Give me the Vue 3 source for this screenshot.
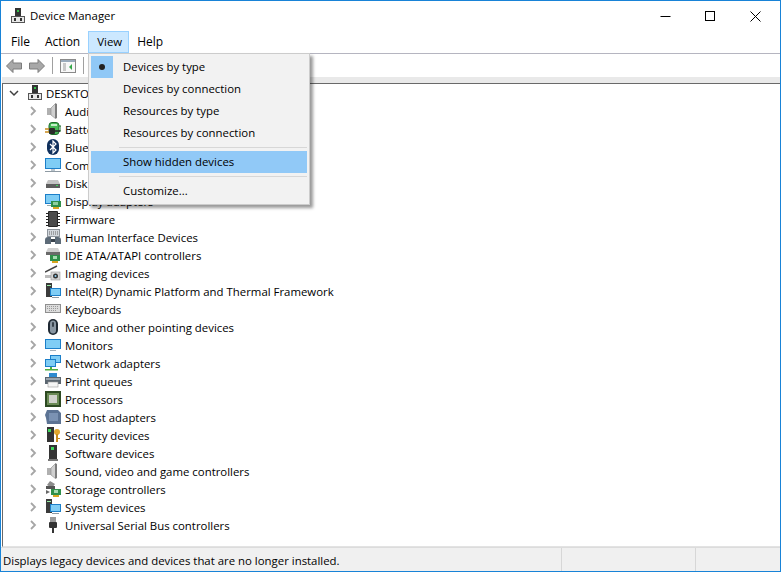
<script setup>
const menuBar = ['File', 'Action', 'View', 'Help']

const devices = [
  { label: 'Audio inputs and outputs', icon: 'speaker' },
  { label: 'Batteries', icon: 'battery' },
  { label: 'Bluetooth', icon: 'bluetooth' },
  { label: 'Computer', icon: 'monitor' },
  { label: 'Disk drives', icon: 'disk' },
  { label: 'Display adapters', icon: 'display' },
  { label: 'Firmware', icon: 'chip' },
  { label: 'Human Interface Devices', icon: 'hid' },
  { label: 'IDE ATA/ATAPI controllers', icon: 'ide' },
  { label: 'Imaging devices', icon: 'camera' },
  { label: 'Intel(R) Dynamic Platform and Thermal Framework', icon: 'system' },
  { label: 'Keyboards', icon: 'keyboard' },
  { label: 'Mice and other pointing devices', icon: 'mouse' },
  { label: 'Monitors', icon: 'monitor2' },
  { label: 'Network adapters', icon: 'network' },
  { label: 'Print queues', icon: 'printer' },
  { label: 'Processors', icon: 'cpu' },
  { label: 'SD host adapters', icon: 'sd' },
  { label: 'Security devices', icon: 'security' },
  { label: 'Software devices', icon: 'software' },
  { label: 'Sound, video and game controllers', icon: 'speaker' },
  { label: 'Storage controllers', icon: 'storage' },
  { label: 'System devices', icon: 'system' },
  { label: 'Universal Serial Bus controllers', icon: 'usb' }
]

const icons = {
  pc: '<rect x="5" y="0" width="6" height="8" fill="#333"/><rect x="7" y="2" width="2" height="2" fill="#35c04a"/><rect x="1.500" y="8.500" width="13" height="6" fill="#e8e8e8" stroke="#555"/><rect x="4" y="10" width="2" height="3" fill="#333"/><rect x="10" y="10" width="2" height="3" fill="#333"/>',
  speaker: '<rect x="2" y="5" width="4" height="7" fill="#b0b0b0"/><path d="M6 5 L11 0 V16 L6 12 Z" fill="#d0d0d0" stroke="#8a8a8a" stroke-width=".6"/><rect x="10" y="1" width="2" height="14" fill="#7d7d7d"/>',
  battery: '<rect x="4" y="1.500" width="10" height="12" rx="3" fill="#46b955" stroke="#1f6b2a"/><rect x="6" y="3" width="6" height="2" fill="#c4efc9"/><path d="M14 5 H16 V10 H14" fill="none" stroke="#1f6b2a"/><path d="M0 8 H5 M0 11 H5" stroke="#c98a1d" stroke-width="1.400"/><rect x="4" y="7" width="6" height="6" rx="1" fill="#2b2b2b"/><path d="M10 10 H15" stroke="#2b2b2b" stroke-width="1.600"/>',
  bluetooth: '<rect x="2" y="0" width="12" height="16" rx="6" fill="#10305c"/><path d="M5 5 L11 11 L8 14 V2 L11 5 L5 11" fill="none" stroke="#fff" stroke-width="1.200"/>',
  monitor: '<rect x="0" y="1" width="16" height="11" fill="#1c7fc9"/><rect x="1" y="2" width="14" height="9" fill="#7fcdf5"/><rect x="6" y="12" width="4" height="2" fill="#b9c4cc"/><rect x="0" y="14" width="16" height="1" fill="#8e9aa3"/>',
  disk: '<path d="M3 5 H13 L15 9 H1 Z" fill="#c4c4c4"/><rect x="1" y="9" width="14" height="4" fill="#5e5e5e"/><rect x="11" y="10" width="2" height="1" fill="#3dd65a"/>',
  display: '<rect x="0" y="1" width="15" height="10" fill="#1c7fc9"/><rect x="1" y="2" width="13" height="8" fill="#7fcdf5"/><rect x="2" y="12" width="6" height="1" fill="#9aa"/><rect x="6" y="8" width="10" height="6" fill="#2f8f4a"/><rect x="8" y="14" width="6" height="2" fill="#d9a520"/><rect x="8" y="9" width="5" height="3" fill="#8fcf9f"/>',
  chip: '<rect x="3" y="0" width="10" height="16" rx="1" fill="#262626"/><rect x="4" y="1" width="8" height="14" fill="#4a4a4a"/><path d="M1 2.500 H3 M1 5.500 H3 M1 8.500 H3 M1 11.500 H3 M1 14.500 H3 M13 2.500 H15 M13 5.500 H15 M13 8.500 H15 M13 11.500 H15 M13 14.500 H15" stroke="#222"/>',
  hid: '<rect x="2.500" y="0.500" width="12" height="7" fill="#d3d8de" stroke="#8e959c"/><path d="M4 3 H13 M4 5 H13" stroke="#666" stroke-dasharray="1 1"/><path d="M0 15 V11 Q0 8 3 8 H6 V15 M10 15 V8 H13 Q16 8 16 11 V15" fill="#5d6b78"/><rect x="6" y="10" width="4" height="3" fill="#39434d"/>',
  ide: '<path d="M3 1 H13 L15 5 H1 Z" fill="#cfcfcf"/><rect x="1" y="5" width="14" height="3" fill="#6a6a6a"/><rect x="5" y="8" width="10" height="6" fill="#2f8f4a"/><rect x="7" y="14" width="6" height="2" fill="#d9a520"/><rect x="8" y="9" width="4" height="3" fill="#a5dbb0"/>',
  camera: '<path d="M0 7 L12 1" stroke="#444" stroke-width="1.400"/><path d="M0 10 H6 V13 H0 Z" fill="#bbb"/><rect x="6" y="7" width="9" height="8" fill="#d5d5d5" stroke="#999" stroke-width=".6"/><circle cx="10.500" cy="11" r="2.500" fill="#333"/><circle cx="10.500" cy="11" r="1" fill="#8fd3f7"/>',
  system: '<rect x="1" y="0" width="6" height="14" fill="#3b3b3b"/><rect x="2" y="2" width="4" height="1" fill="#9cf0a8"/><rect x="5" y="5" width="11" height="8" fill="#1c7fc9"/><rect x="6" y="6" width="9" height="6" fill="#7fcdf5"/><rect x="7" y="14" width="7" height="1" fill="#8e9aa3"/>',
  keyboard: '<rect x="0.500" y="3.500" width="15" height="8" fill="#dcdcdc" stroke="#8f8f8f"/><path d="M2 5.500 H14 M2 7.500 H14 M4 9.500 H12" stroke="#9a9a9a" stroke-dasharray="1 1"/>',
  mouse: '<rect x="3" y="0" width="10" height="16" rx="5" fill="#1f2933"/><rect x="5" y="1.500" width="6" height="13" rx="3" fill="#8a97a3"/><rect x="7" y="3" width="2" height="5" rx="1" fill="#38424c"/>',
  monitor2: '<rect x="0" y="2" width="16" height="10" fill="#1c7fc9"/><rect x="1" y="3" width="14" height="8" fill="#7fcdf5"/><rect x="5" y="13" width="6" height="1" fill="#a8b2ba"/>',
  network: '<rect x="5" y="0" width="11" height="8" fill="#1c7fc9"/><rect x="6" y="1" width="9" height="6" fill="#7fcdf5"/><rect x="0" y="4" width="11" height="8" fill="#1c7fc9"/><rect x="1" y="5" width="9" height="6" fill="#7fcdf5"/><rect x="5" y="12" width="2" height="2" fill="#4fae3f"/><rect x="0" y="14" width="13" height="1.500" fill="#4fae3f"/>',
  printer: '<rect x="4" y="0" width="8" height="4" fill="#2e8bd0"/><rect x="0" y="4" width="16" height="7" fill="#5b6670"/><rect x="1" y="5" width="14" height="2" fill="#9aa5ae"/><rect x="3" y="9" width="10" height="5" fill="#f5f5f5" stroke="#999" stroke-width=".6"/>',
  cpu: '<rect x="0" y="0" width="16" height="16" fill="#2d4a22"/><rect x="2" y="2" width="12" height="12" fill="#6a8a55"/><rect x="4" y="4" width="8" height="8" fill="#d0d2cc"/>',
  sd: '<path d="M2 1 H13 L16 4 V15 H2 L1 9 L0 6 Z" fill="#5c7394"/><rect x="4" y="4" width="9" height="8" fill="#7b92b3"/>',
  security: '<rect x="2" y="0" width="7" height="15" fill="#333"/><rect x="3" y="2" width="3" height="3" fill="#3dd65a"/><circle cx="12" cy="5" r="3" fill="#e0a82e"/><rect x="11" y="7" width="2" height="8" fill="#c88d1c"/><rect x="13" y="11" width="2" height="1" fill="#c88d1c"/>',
  software: '<rect x="4" y="0" width="8" height="15" fill="#333"/><rect x="6" y="2" width="3" height="3" fill="#3dd65a"/><rect x="3" y="14" width="10" height="2" fill="#777"/>',
  storage: '<path d="M5 0 L10 3 L7 7 L2 4 Z" fill="#8c8c8c"/><rect x="1" y="5" width="9" height="3" fill="#555"/><path d="M1 9 L5 11 L1 13 Z" fill="#666"/><rect x="6" y="8" width="10" height="6" fill="#2f8f4a"/><rect x="8" y="14" width="6" height="2" fill="#d9a520"/><rect x="9" y="9" width="4" height="3" fill="#a5dbb0"/>',
  usb: '<rect x="5" y="0" width="6" height="5" fill="#999"/><rect x="4" y="5" width="8" height="6" rx="1" fill="#333"/><rect x="7" y="11" width="2" height="5" fill="#333"/>'
}
</script>

<template>
  <div class="window">
    <header class="title-bar">
      <svg class="title-icon" viewBox="0 0 16 16" width="16" height="16" v-html="icons.pc"></svg>
      <span class="title-text">Device Manager</span>
      <div class="controls">
        <svg width="45" height="30" viewBox="0 0 45 30"><path d="M17.500 15.500 H27.500" stroke="#000" /></svg>
        <svg width="45" height="30" viewBox="0 0 45 30"><rect x="17.500" y="10.500" width="9" height="9" fill="none" stroke="#000" /></svg>
        <svg width="45" height="30" viewBox="0 0 45 30"><path d="M17.500 10.500 L27.500 20.500 M27.500 10.500 L17.500 20.500" stroke="#000" /></svg>
      </div>
    </header>

    <nav class="menu-bar">
      <span v-for="item in menuBar" :key="item" class="menu-item" :class="{ open: item === 'View' }">{{ item }}</span>
    </nav>

    <div class="toolbar">
      <svg width="16" height="16" viewBox="0 0 16 16"><path d="M.5 8 L7 1.500 V5 H15.500 V11 H7 V14.500 Z" fill="#a8a8a8" stroke="#7c7c7c" /></svg>
      <svg width="16" height="16" viewBox="0 0 16 16"><path d="M15.500 8 L9 1.500 V5 H.5 V11 H9 V14.500 Z" fill="#a8a8a8" stroke="#7c7c7c" /></svg>
      <i class="tool-sep"></i>
      <svg width="16" height="16" viewBox="0 0 16 16"><rect x=".5" y="1.500" width="15" height="13" fill="#f8f8f8" stroke="#8a8a8a" /><rect x="1" y="2" width="14" height="2" fill="#9ab" /><path d="M3 6 H6 M3 8 H6 M3 10 H6 M3 12 H6" stroke="#9a9a9a" /><path d="M12 6 V12 L9 9 Z" fill="#35a84a" /></svg>
      <i class="tool-sep"></i>
    </div>

    <main class="tree">
      <div class="tree-row root">
        <svg class="caret" width="10" height="10" viewBox="0 0 10 10"><path d="M1 3 L5 7 L9 3" fill="none" stroke="#404040" stroke-width="1.500" /></svg>
        <svg class="row-icon" viewBox="0 0 16 16" width="16" height="16" v-html="icons.pc"></svg>
        <span class="root-label">DESKTOP-7JKQ2M1</span>
      </div>
      <div v-for="device in devices" :key="device.label" class="tree-row child">
        <svg class="caret" width="10" height="10" viewBox="0 0 10 10"><path d="M3 1 L7 5 L3 9" fill="none" stroke="#a6a6a6" stroke-width="1.800" /></svg>
        <svg class="row-icon" viewBox="0 0 16 16" width="16" height="16" v-html="icons[device.icon]"></svg>
        <span class="child-label">{{ device.label }}</span>
      </div>
    </main>

    <footer class="status-bar">
      <span class="status-text">Displays legacy devices and devices that are no longer installed.</span>
      <span class="status-cell cell-a"></span>
      <span class="status-cell cell-b"></span>
    </footer>

    <div class="dropdown">
      <div class="drop-row"><span class="check"><i></i></span><span class="drop-label">Devices by type</span></div>
      <div class="drop-row"><span class="check none"></span><span class="drop-label">Devices by connection</span></div>
      <div class="drop-row"><span class="check none"></span><span class="drop-label">Resources by type</span></div>
      <div class="drop-row"><span class="check none"></span><span class="drop-label">Resources by connection</span></div>
      <div class="drop-sep"></div>
      <div class="drop-row active"><span class="check none"></span><span class="drop-label">Show hidden devices</span></div>
      <div class="drop-sep"></div>
      <div class="drop-row"><span class="check none"></span><span class="drop-label">Customize...</span></div>
    </div>
  </div>
</template>

<style>
html,
body {
  margin: 0;
  background: #fff;
}
</style>

<style scoped>
.window {
  position: relative;
  box-sizing: border-box;
  width: 781px;
  height: 572px;
  display: flex;
  flex-direction: column;
  border: 1px solid #1883d7;
  background: #fff;
  overflow: hidden;
  font-family: "Open Sans", "Noto Sans", sans-serif;
  font-size: 11.4px;
  color: #000;
}

.title-bar {
  height: 29px;
  padding-bottom: 1px;
  display: flex;
  align-items: center;
  flex-shrink: 0;
}

.title-icon {
  margin-left: 9px;
}

.title-text {
  margin-left: 4px;
}

.controls {
  margin-left: auto;
  margin-right: 2px;
  display: flex;
}

.menu-bar {
  height: 23px;
  box-sizing: border-box;
  flex-shrink: 0;
  display: flex;
  border-bottom: 1px solid #b5b5c0;
}

.menu-item {
  box-sizing: border-box;
  height: 22px;
  line-height: 19px;
  padding: 0 7px;
  border: 1px solid transparent;
  font-size: 12px;
}

.menu-item:first-child {
  margin-left: 2px;
  padding-right: 6px;
}

.menu-item.open {
  width: 41px;
  padding: 0 0 0 8px;
  font-size: 11.4px;
  background: #cce8ff;
  border-color: #99d1ff;
}

.toolbar {
  height: 23px;
  flex-shrink: 0;
  display: flex;
  align-items: center;
  padding-left: 5px;
  gap: 7px;
}

.tool-sep {
  width: 1px;
  height: 17px;
  background: #a0a0a0;
}

.tree {
  flex: 1;
  min-height: 0;
  margin: 6px 0 0 1px;
  background: #fff;
  border-top: 1px solid #696969;
  border-left: 1px solid #696969;
  border-bottom: 1px solid #e3e3e3;
  box-shadow: 0 -6px 0 #e9e9e9;
}

.tree-row {
  height: 18px;
  display: flex;
  align-items: center;
  white-space: nowrap;
}

.root {
  padding-left: 6px;
}

.child {
  padding-left: 25px;
}

.root .caret {
  margin-right: 8px;
}

.child .caret {
  margin-right: 7px;
}

.root-label {
  margin-left: 3px;
}

.child-label {
  margin-left: 4px;
}

.status-bar {
  height: 23px;
  flex-shrink: 0;
  display: flex;
  align-items: center;
  background: #f0f0f0;
  border-top: 1px solid #dcdcdc;
}

.status-text {
  width: 560px;
  padding-left: 2px;
  padding-top: 1px;
  box-sizing: border-box;
}

.status-cell {
  height: 100%;
  border-left: 1px solid #d7d7d7;
}

.cell-a {
  width: 133px;
}

.dropdown {
  position: absolute;
  left: 87px;
  top: 52px;
  width: 222px;
  box-sizing: border-box;
  padding: 2px;
  background: #f2f2f2;
  border: 1px solid #cccccc;
  box-shadow: 3px 3px 3px rgba(0, 0, 0, 0.4);
}

.drop-row {
  height: 22px;
  display: flex;
  align-items: center;
}

.drop-label {
  padding-bottom: 2px;
}

.drop-row.active {
  background: #91c9f7;
}

.check {
  width: 22px;
  height: 22px;
  margin-right: 10px;
  display: flex;
  align-items: center;
  justify-content: center;
  background: #90c8f6;
}

.check.none {
  background: transparent;
}

.check i {
  width: 6px;
  height: 6px;
  border-radius: 50%;
  background: #222;
}

.drop-sep {
  height: 1px;
  margin: 3px 0 3px 28px;
  background: #d7d7d7;
}
</style>
